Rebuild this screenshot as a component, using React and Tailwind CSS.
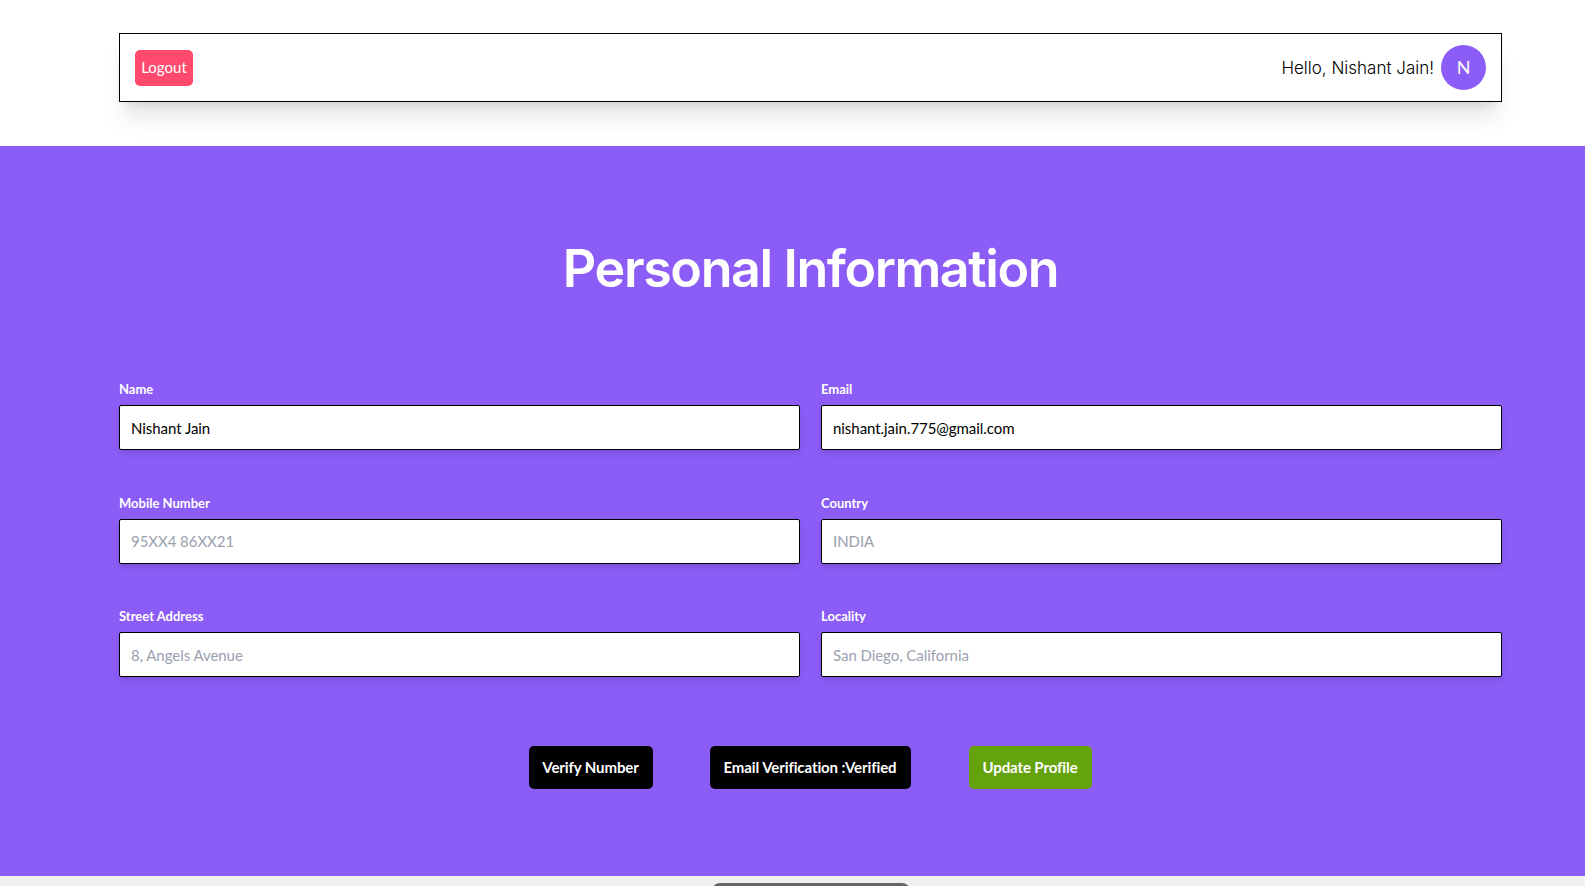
const fields = [
  { label: "Name", value: "Nishant Jain" },
  { label: "Email", value: "nishant.jain.775@gmail.com" },
  { label: "Mobile Number", placeholder: "95XX4 86XX21" },
  { label: "Country", placeholder: "INDIA" },
  { label: "Street Address", placeholder: "8, Angels Avenue" },
  { label: "Locality", placeholder: "San Diego, California" },
];

function Field({ label, value, placeholder }) {
  return (
    <div className="flex flex-col">
      <label className="text-[13px] leading-[18px] font-bold text-white mb-[7px]">{label}</label>
      <input
        readOnly
        value={value}
        placeholder={placeholder}
        className="h-[45px] w-full bg-white border border-black rounded-[2px] px-[11px] text-[15px] tracking-[-0.05px] text-black placeholder:text-gray-400 shadow-md outline-none"
      />
    </div>
  );
}

export default function App() {
  return (
    <div className="h-[886px] overflow-hidden bg-white font-['Lato',sans-serif]">
      <div className="pl-[119px] pr-[83px] pt-[33px] h-[146px]">
        <nav className="h-[69px] border border-black bg-white shadow-xl flex items-center justify-between pl-[15px] pr-[15px]">
          <button className="h-[36px] w-[58px] bg-[#ff4a6e] text-white text-[15px] rounded-[5px]">Logout</button>
          <div className="flex items-center gap-[7px]">
            <span className="text-[17px] leading-[28px] pt-[1px] font-light text-black font-['Inter',sans-serif]">Hello, Nishant Jain!</span>
            <div className="w-[45px] h-[45px] rounded-full bg-[#8b5cf6] text-white text-[18px] flex items-center justify-center">N</div>
          </div>
        </nav>
      </div>

      <main className="h-[730px] bg-[#8b5cf6] pl-[119px] pr-[83px]">
        <h1 className="pt-[90px] h-[234px] text-center text-white text-[52px] leading-[66px] font-semibold tracking-[-1.4px] font-['Inter',sans-serif]">
          Personal Information
        </h1>
        <form className="grid grid-cols-2 gap-x-[21px] gap-y-[43.5px]">
          {fields.map((f) => (
            <Field key={f.label} {...f} />
          ))}
        </form>
        <div className="flex justify-center gap-[57px] mt-[69px] pr-[1px]">
          <button className="h-[43px] w-[124px] bg-black text-white text-[15px] font-bold tracking-[-0.1px] rounded-[5px]">Verify Number</button>
          <button className="h-[43px] w-[201px] bg-black text-white text-[15px] font-bold tracking-[-0.1px] rounded-[5px]">Email Verification :Verified</button>
          <button className="h-[43px] w-[123px] ml-[1px] bg-[#65a30d] text-white text-[15px] font-bold tracking-[-0.1px] rounded-[5px]">Update Profile</button>
        </div>
      </main>

      <div className="h-[10px] bg-[#f1f1f1] flex justify-center pl-[36px] pt-[7px] overflow-hidden">
        <div className="w-[198px] h-[8px] shrink-0 rounded-t-[8px] bg-[#666666]"></div>
      </div>
    </div>
  );
}
